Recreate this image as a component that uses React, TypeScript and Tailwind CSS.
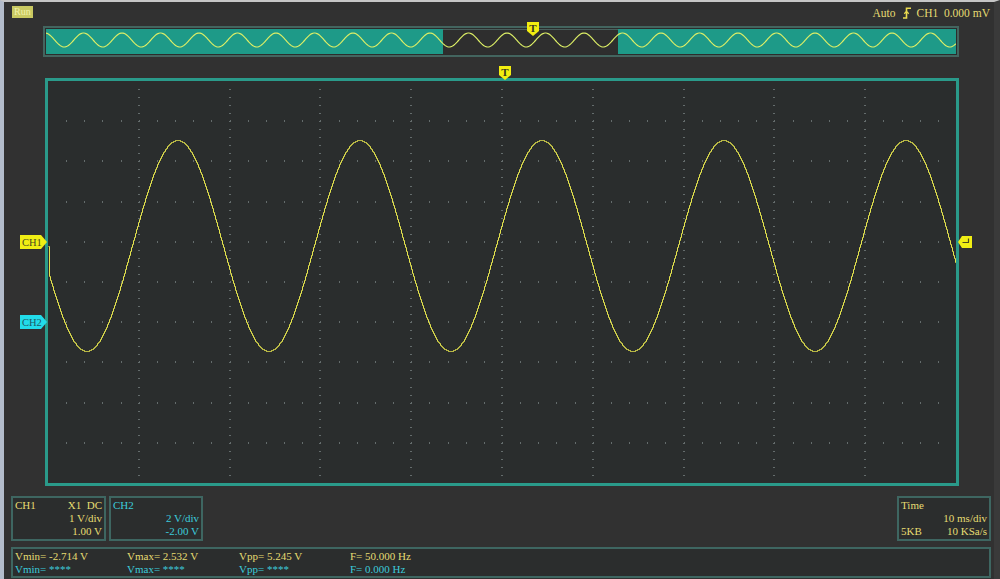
import React from "react";

const W = 908;
const H = 402;

function gridRects() {
  const out: React.ReactElement[] = [];
  const dx = W / 10;
  const dy = H / 10;
  for (let i = 1; i <= 9; i++) {
    const x = Math.round(i * dx);
    for (let k = 1; k < 50; k++) {
      const y = Math.round((k * dy) / 5);
      out.push(<rect key={`v${i}-${k}`} x={x - 1} y={y} width={2} height={1} fill="#646c6c" />);
    }
  }
  for (let j = 1; j <= 9; j++) {
    const y = Math.round(j * dy);
    for (let k = 1; k < 50; k++) {
      const x = Math.round((k * dx) / 5);
      out.push(<rect key={`h${j}-${k}`} x={x} y={y - 1} width={1} height={2} fill="#646c6c" />);
    }
  }
  return out;
}

function mainWave() {
  const P = 182;
  const x0 = -7.5;
  let d = "M0 165";
  for (let x = 1; x <= W; x++) {
    const y = Math.round(164.6 + 105.4 * Math.sin((2 * Math.PI * (x - x0)) / P));
    d += ` H${x} V${y}`;
  }
  return d;
}

function overviewWave() {
  const P = 38.5;
  let d = "";
  for (let x = 0; x <= 910; x++) {
    const y = 11 - 7 * Math.cos((2 * Math.PI * (x + 1)) / P);
    d += x === 0 ? `M0 ${y.toFixed(2)}` : ` L${x} ${y.toFixed(2)}`;
  }
  return d;
}

const GRID = gridRects();
const WAVE = mainWave();
const OWAVE = overviewWave();

function TMarker() {
  return (
    <svg width="12" height="14" viewBox="0 0 12 14">
      <polygon points="0,0 12,0 12,9 6,14 0,9" fill="#f2ee10" />
      <text x="6" y="10" textAnchor="middle" fontSize="11" fontWeight="bold" fill="#3a3a20" fontFamily="Liberation Serif, serif">
        T
      </text>
    </svg>
  );
}

function ChMarker({ label, fill, text }: { label: string; fill: string; text: string }) {
  return (
    <svg width="27" height="14" viewBox="0 0 27 14">
      <polygon points="0,0 21,0 27,7 21,14 0,14" fill={fill} />
      <text x="2" y="11" fontSize="10.5" fill={text} fontFamily="Liberation Serif, serif">
        {label}
      </text>
    </svg>
  );
}

export default function App() {
  const yel = "text-[#e6dc72]";
  const cyan = "text-[#3ccbdb]";
  return (
    <div className="w-[1000px] h-[579px] bg-[#313131] border-l-[4px] border-l-[#b3bccb] border-t-2 border-t-[#c6c6c6] border-r-[6px] border-r-[#3a3a3a] flex flex-col overflow-hidden font-['Liberation_Serif',serif] text-[11px] leading-[13px]">
      {/* top row */}
      <div className="h-[24px] flex items-start justify-between">
        <div className="mt-[4px] ml-[8px] h-[12px] px-[2px] bg-[#c9c962] text-[#f2f2aa] text-[10px] leading-[12px]">Run</div>
        <div className={`mt-[4px] mr-[4px] flex items-center ${yel} text-[11.5px] leading-[14px]`}>
          <span>Auto</span>
          <svg className="ml-[7px] mr-[6px]" width="8" height="12" viewBox="0 0 8 12">
            <path d="M0 11 H3.5 V1.2 H8" stroke="#ecdc50" strokeWidth="1.6" fill="none" />
            <path d="M1.3 6.8 L3.5 4.4 L5.7 6.8" stroke="#ecdc50" strokeWidth="1.3" fill="none" />
          </svg>
          <span>CH1&nbsp;&nbsp;0.000 mV</span>
        </div>
      </div>

      {/* overview */}
      <div className="relative ml-[39px] w-[916px] h-[31px] border-2 border-[#43655f] bg-[#2c2c2c] p-[1px]">
        <svg width="910" height="25" viewBox="0 0 910 25" className="block">
          <rect x="0" y="0" width="397" height="25" fill="#1e9a88" />
          <rect x="572" y="0" width="338" height="25" fill="#1e9a88" />
          <rect x="397" y="0" width="175" height="25" fill="#2e2e2e" />
          <line x1="397" y1="0.5" x2="572" y2="0.5" stroke="#4a5f5c" />
          <path d={OWAVE} stroke="#dcee66" strokeWidth="1.2" fill="none" />
        </svg>
        <div className="absolute left-[482px] top-[-6px]">
          <TMarker />
        </div>
      </div>

      {/* main plot */}
      <div className="relative mt-[21px] ml-[41px] w-[914px] h-[408px] border-[3px] border-[#2a9a8a] bg-[#2a2d2d]">
        <svg width={W} height={H} viewBox={`0 0 ${W} ${H}`} className="block">
          {GRID}
          <g transform="translate(0.5,0.5)">
            <path d={WAVE} stroke="#e4e44e" strokeWidth="1" fill="none" />
          </g>
        </svg>
        <div className="absolute left-[451px] top-[-15px]">
          <TMarker />
        </div>
        <div className="absolute left-[-28px] top-[154px]">
          <ChMarker label="CH1" fill="#f0ee14" text="#4a4a20" />
        </div>
        <div className="absolute left-[-28px] top-[234px]">
          <ChMarker label="CH2" fill="#22dcea" text="#1f5a66" />
        </div>
        <div className="absolute left-[910px] top-[155px]">
          <svg width="14" height="12" viewBox="0 0 14 12">
            <polygon points="0,6 4,0 14,0 14,12 4,12" fill="#f0ee14" />
            <path d="M4.5 6.5 H11 M10.5 6.5 V2.5" stroke="#4a4a20" strokeWidth="1.2" fill="none" />
          </svg>
        </div>
      </div>

      {/* bottom panels */}
      <div className="mt-[10px] flex items-start">
        <div className={`ml-[7px] w-[95px] h-[45px] border-2 border-[#3e6661] bg-[#2b2d2d] px-[2px] pt-[1px] ${yel}`}>
          <div className="flex justify-between">
            <span>CH1</span>
            <span>X1&nbsp;&nbsp;DC</span>
          </div>
          <div className="text-right">1 V/div</div>
          <div className="text-right">1.00 V</div>
        </div>
        <div className={`ml-[3px] w-[94px] h-[45px] border-2 border-[#3e6661] bg-[#2b2d2d] px-[2px] pt-[1px] ${cyan}`}>
          <div>CH2</div>
          <div className="text-right">2 V/div</div>
          <div className="text-right">-2.00 V</div>
        </div>
        <div className={`ml-auto mr-[3px] w-[94px] h-[45px] border-2 border-[#3e6661] bg-[#2b2d2d] px-[2px] pt-[1px] ${yel}`}>
          <div>Time</div>
          <div className="text-right">10 ms/div</div>
          <div className="flex justify-between">
            <span>5KB</span>
            <span>10 KSa/s</span>
          </div>
        </div>
      </div>

      <div className="mt-[6px] ml-[7px] mr-[3px] h-[31px] border-2 border-[#3e6661] bg-[#2b2d2d] px-[2px] pt-[1px]">
        <div className={`flex ${yel}`}>
          <span className="w-[112px]">Vmin= -2.714 V</span>
          <span className="w-[112px]">Vmax= 2.532 V</span>
          <span className="w-[111px]">Vpp= 5.245 V</span>
          <span>F= 50.000 Hz</span>
        </div>
        <div className={`flex ${cyan}`}>
          <span className="w-[112px]">Vmin= ****</span>
          <span className="w-[112px]">Vmax= ****</span>
          <span className="w-[111px]">Vpp= ****</span>
          <span>F= 0.000 Hz</span>
        </div>
      </div>
    </div>
  );
}
